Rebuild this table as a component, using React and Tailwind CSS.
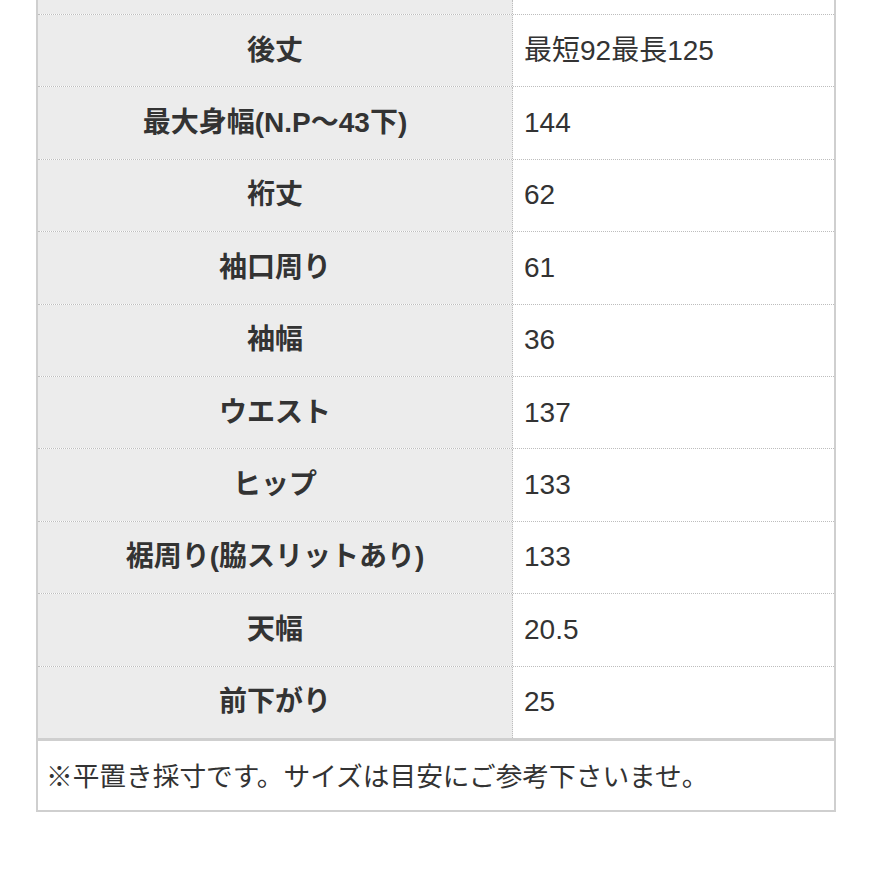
import React from "react";

const rows = [
    ["後丈", "最短92最長125"],
    ["最大身幅(N.P〜43下)", "144"],
    ["裄丈", "62"],
    ["袖口周り", "61"],
    ["袖幅", "36"],
    ["ウエスト", "137"],
    ["ヒップ", "133"],
    ["裾周り(脇スリットあり)", "133"],
    ["天幅", "20.5"],
    ["前下がり", "25"],
]

const App = () => {
    return (
        <div className="w-[873px] h-[873px] bg-white overflow-hidden text-[#333]"
            style={{ fontFamily: '"Liberation Sans", "Noto Sans CJK JP", sans-serif' }}>
            <div className="ml-[36px] w-[800px] border-x-2 border-b-2 border-[#cfcfcf]">
                {/* cut-off row above */}
                <div className="flex h-[14px]">
                    <div className="w-[475px] bg-[#ececec] border-r border-dotted border-[#bdbdbd]"></div>
                    <div className="flex-1"></div>
                </div>
                {rows.map(([label, value], i) => (
                    <div key={i} className="flex h-[72.4px] border-t border-dotted border-[#bdbdbd]">
                        <div className="w-[475px] bg-[#ececec] border-r border-dotted border-[#bdbdbd] flex items-center justify-center font-bold text-[28px]">
                            {label}
                        </div>
                        <div className="flex-1 flex items-center pl-[11px] text-[28px]">
                            {value}
                        </div>
                    </div>
                ))}
                <div className="border-t-[3px] border-[#cfcfcf] h-[72px] flex items-center pl-[8px] text-[26.7px]"
                    style={{ fontFamily: '"Noto Sans CJK JP", sans-serif' }}>
                    ※平置き採寸です。サイズは目安にご参考下さいませ。
                </div>
            </div>
        </div>
    )
}

export default App;
